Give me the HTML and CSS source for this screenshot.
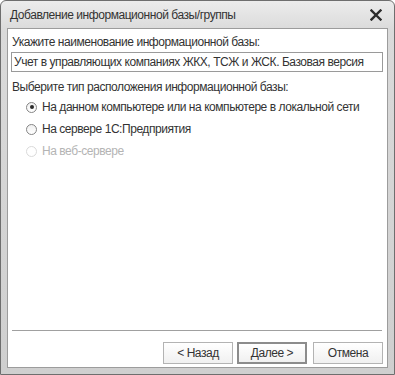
FILE: index.html
```html
<!DOCTYPE html>
<html lang="ru">
<head>
  <meta charset="UTF-8">
  <title>Добавление информационной базы/группы</title>
  <link rel="stylesheet" href="styles.css">
</head>
<body>
  <div class="window">
    <div class="titlebar">
      <span class="title">Добавление информационной базы/группы</span>
      <svg class="close" width="12" height="12" viewBox="0 0 12 12">
        <path d="M1.5 1.5 L10.5 10.5 M10.5 1.5 L1.5 10.5" stroke="#2b2b2b" stroke-width="2.4" stroke-linecap="square"/>
      </svg>
    </div>
    <div class="content">
      <div class="label first">Укажите наименование информационной базы:</div>
      <input class="field" type="text" value="Учет в управляющих компаниях ЖКХ, ТСЖ и ЖСК. Базовая версия">
      <div class="label second">Выберите тип расположения информационной базы:</div>
      <div class="radios">
        <div class="radio-row"><span class="radio checked"></span>На данном компьютере или на компьютере в локальной сети</div>
        <div class="radio-row"><span class="radio"></span>На сервере 1С:Предприятия</div>
        <div class="radio-row disabled"><span class="radio"></span>На веб-сервере</div>
      </div>
      <div class="spacer"></div>
      <div class="separator"></div>
      <div class="buttons">
        <button class="btn">&lt; Назад</button>
        <button class="btn default">Далее &gt;</button>
        <button class="btn cancel">Отмена</button>
      </div>
    </div>
  </div>
</body>
</html>
```

FILE: styles.css
```css
/* окно диалога */
body {
  margin: 0;
  background: #fff;
  font-family: "Liberation Sans", Arial, sans-serif;
  font-size: 12px;
  letter-spacing: -0.45px;
  color: #333;
}

.window {
  box-sizing: border-box;
  width: 395px;
  height: 375px;
  border: 1px solid #6e6e6e;
  border-radius: 6px 6px 0 0;
  padding: 0 6px 6px 6px;
  background: linear-gradient(to bottom, #ececec 0, #dadada 30px, #cfcfcf 100%);
  display: flex;
  flex-direction: column;
}

.titlebar {
  height: 27px;
  display: flex;
  align-items: center;
  justify-content: space-between;
  padding-left: 3px;
  padding-right: 6px;
}

.title {
  color: #333;
  white-space: nowrap;
}

.close {
  margin-top: 1px;
}

.content {
  flex: 1;
  background: #fff;
  border: 1px solid #9c9c9c;
  display: flex;
  flex-direction: column;
  padding: 0 4px 3px 3px;
}

.label {
  height: 15px;
  line-height: 15px;
  padding-left: 1px;
  white-space: nowrap;
}

.label.first {
  margin-top: 6px;
}

.label.second {
  margin-top: 8px;
}

.field {
  box-sizing: border-box;
  margin-top: 2px;
  width: 100%;
  height: 20px;
  border: 1px solid #9a9a9a;
  padding: 0 0 0 2px;
  font-family: "Liberation Sans", Arial, sans-serif;
  font-size: 12px;
  letter-spacing: -0.45px;
  color: #333;
  outline: none;
}

.radios {
  margin-top: 1px;
  padding-left: 15px;
}

.radio-row {
  height: 22px;
  display: flex;
  align-items: center;
  white-space: nowrap;
}

.radio {
  box-sizing: border-box;
  flex: none;
  width: 11px;
  height: 11px;
  border: 1px solid #858585;
  border-radius: 50%;
  background: linear-gradient(to bottom, #f0f0f0, #fff);
  margin-right: 5px;
  display: flex;
  align-items: center;
  justify-content: center;
}

.radio.checked::after {
  content: "";
  width: 4px;
  height: 4px;
  border-radius: 50%;
  background: #2a2a2a;
}

.radio-row.disabled {
  color: #b4b4b4;
}

.radio-row.disabled .radio {
  border-color: #dadada;
  background: #fff;
}

.spacer {
  flex: 1;
}

.separator {
  height: 1px;
  background: #a0a0a0;
  margin: 0 1px 0 1px;
}

.buttons {
  display: flex;
  justify-content: flex-end;
  gap: 4px;
  margin-top: 11px;
}

.btn {
  box-sizing: border-box;
  width: 70px;
  height: 22px;
  border: 1px solid #b3b3b3;
  background: linear-gradient(to bottom, #ffffff, #f0f0f0);
  font-family: "Liberation Sans", Arial, sans-serif;
  font-size: 12px;
  letter-spacing: -0.45px;
  color: #333;
  padding: 0;
}

.btn.default {
  border: 2px solid #8c8c8c;
}

.btn.cancel {
  margin-left: 2px;
}
```
